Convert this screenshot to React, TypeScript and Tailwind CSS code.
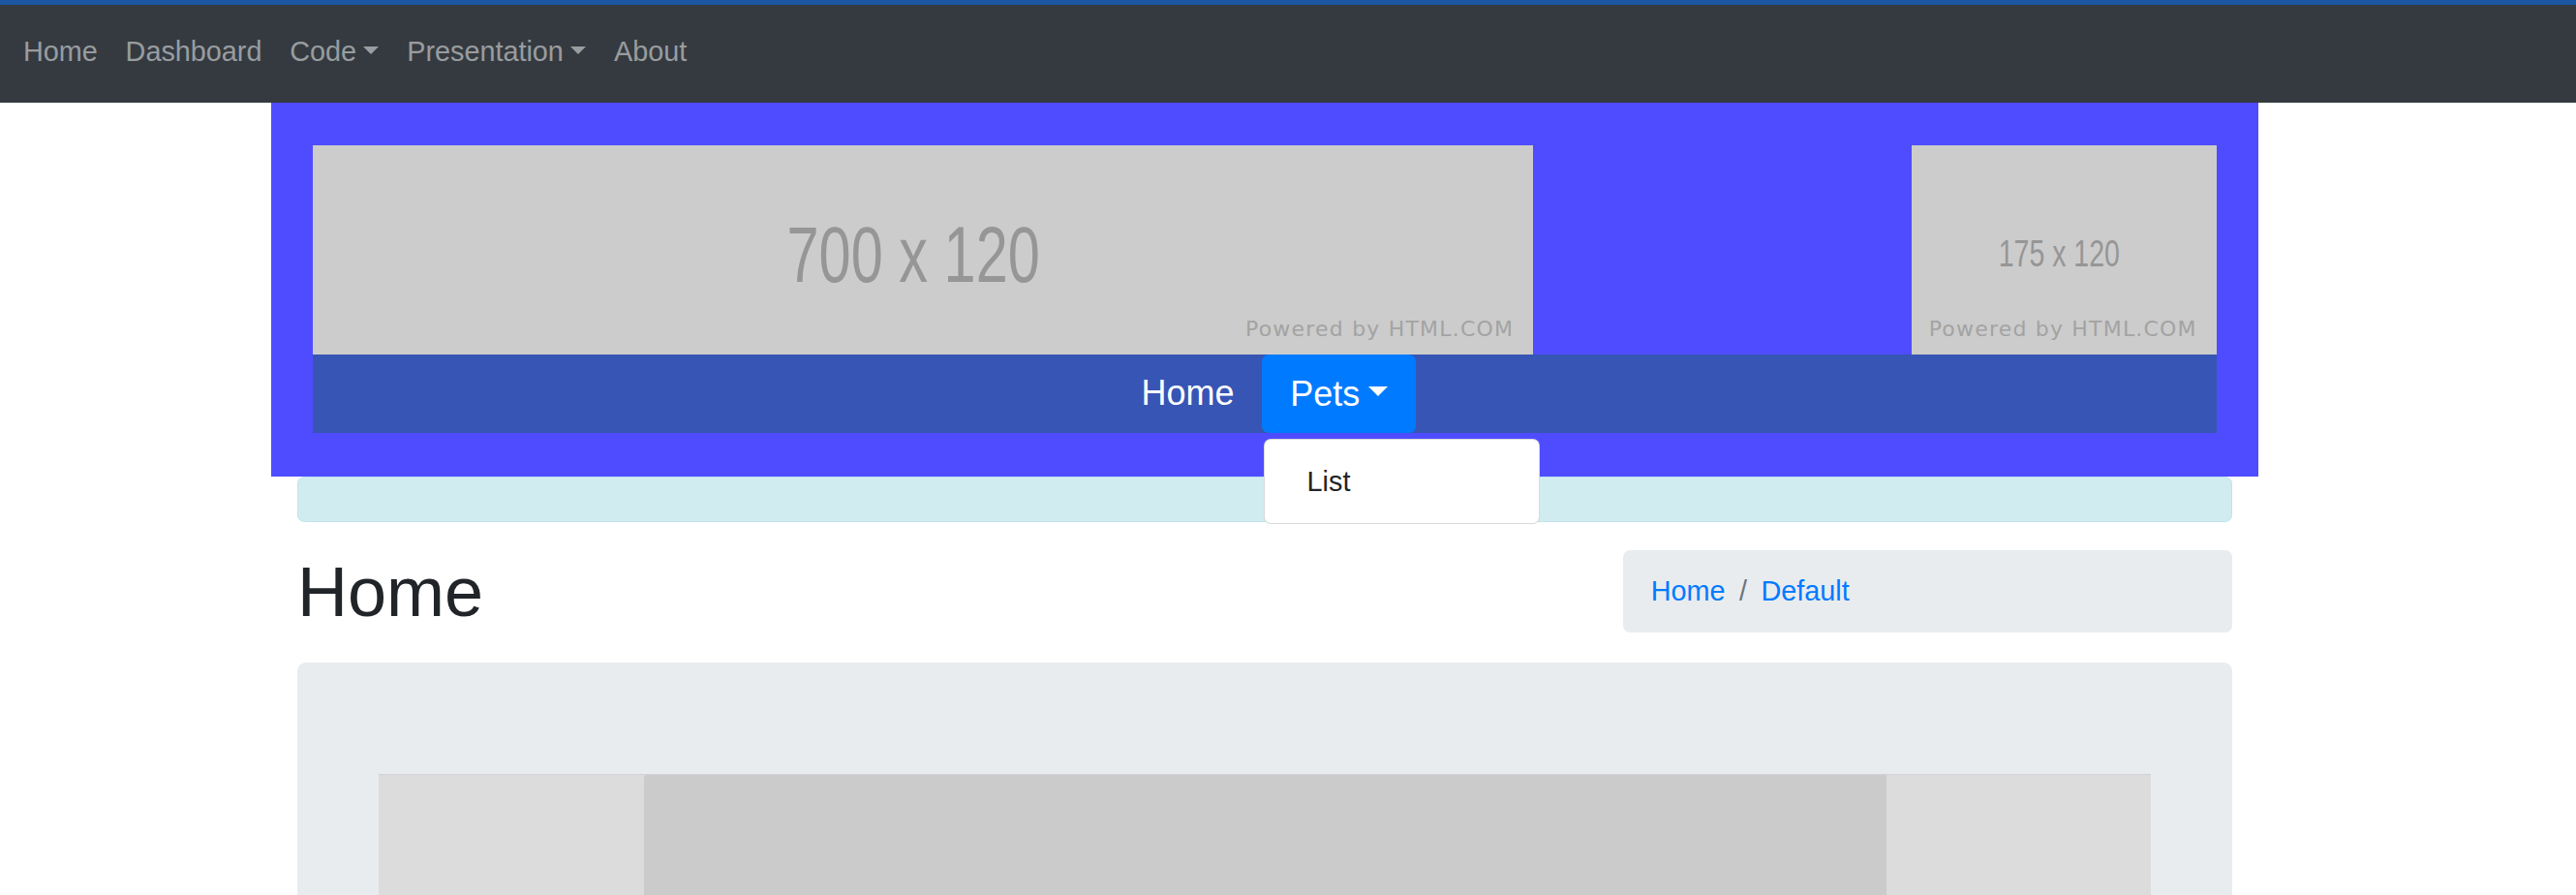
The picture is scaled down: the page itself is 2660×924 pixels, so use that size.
import { ReactNode } from "react";

const TOP_LINKS = [
  { label: "Home" },
  { label: "Dashboard" },
  { label: "Code", caret: true },
  { label: "Presentation", caret: true },
  { label: "About" },
];

function Caret({ size, color }: { size: "sm" | "lg"; color: string }) {
  const cls =
    size === "lg"
      ? "ml-[9.2px] border-t-[10.8px] border-x-[10.8px]"
      : "ml-[7.3px] border-t-[8.6px] border-x-[8.6px]";
  return (
    <span
      className={`inline-block align-[0.255em] border-x-transparent ${cls} ${color}`}
    />
  );
}

function Placeholder({
  width,
  label,
  labelClass,
}: {
  width: string;
  label: string;
  labelClass: string;
}) {
  return (
    <div
      className={`relative flex h-[216px] items-center justify-center bg-[#cccccc] ${width}`}
    >
      <span className={`text-[#969696] ${labelClass}`}>{label}</span>
      <span className="absolute right-[20px] bottom-[15px] font-['DejaVu_Sans',sans-serif] text-[22px] leading-[22px] tracking-[1.2px] text-[#a3a3a3]">
        Powered by HTML.COM
      </span>
    </div>
  );
}

function Crumb({ children }: { children: ReactNode }) {
  return <span className="text-[#007bff]">{children}</span>;
}

export default function App() {
  return (
    <div className="h-[924px] overflow-hidden bg-white font-['Liberation_Sans',Arial,sans-serif] text-[28.8px] leading-[1.5] text-[#212529]">
      <div className="h-[5px] bg-[#1c56a2]" />
      <nav className="flex h-[101px] items-center bg-[#343a40] pb-[4px] pl-[9.6px]">
        {TOP_LINKS.map((l) => (
          <a key={l.label} className="px-[14.4px] text-white/50">
            {l.label}
            {l.caret && <Caret size="sm" color="border-t-white/50" />}
          </a>
        ))}
      </nav>

      <div className="w-[2612px]">
        <div className="mx-auto w-[2052px]">
          <header className="bg-[#4f4cff] px-[43.2px] pt-[44px] pb-[45px]">
            <div className="flex justify-between">
              <Placeholder
                width="w-[1260px]"
                label="700 x 120"
                labelClass="-translate-x-[10px] translate-y-[5px] scale-y-[1.38] text-[59.5px] leading-none"
              />
              <Placeholder
                width="w-[315px]"
                label="175 x 120"
                labelClass="-translate-x-[5px] translate-y-[3px] scale-y-[1.38] text-[28.5px] leading-none"
              />
            </div>
            <div className="flex h-[81px] justify-center bg-[#3755b4] text-[36px] leading-[54px] text-white">
              <a className="px-[28.8px] py-[13px]">Home</a>
              <div className="relative">
                <button className="h-[81px] rounded-[7.2px] bg-[#007bff] px-[28.8px] leading-[54px] text-white">
                  Pets
                  <Caret size="lg" color="border-t-white" />
                </button>
                <div className="absolute top-[calc(100%+6px)] left-[2px] z-10 w-[285px] rounded-[7.2px] border border-black/15 bg-white py-[14.4px] text-[28.8px] leading-[43.2px] text-[#212529]">
                  <div className="px-[43.2px] py-[7.2px]">List</div>
                </div>
              </div>
            </div>
          </header>

          <div className="px-[27px]">
            <div className="mb-[29px] h-[47px] rounded-[7.2px] border border-[#bee5eb] bg-[#d1ecf1]" />
            <div className="flex items-start justify-between">
              <h1 className="text-[72px] leading-[1.2] font-normal">Home</h1>
              <div className="flex h-[85px] w-[629px] items-center rounded-[7.2px] bg-[#e9ecef] px-[28.8px]">
                <Crumb>Home</Crumb>
                <span className="px-[14.4px] text-[#6c757d]">/</span>
                <Crumb>Default</Crumb>
              </div>
            </div>
            <div className="mt-[30px] rounded-[8.6px] bg-[#e9ecef] px-[57.6px] pt-[115px] pb-[115px]">
              <div className="px-[26px]">
                <div className="flex justify-center border-t border-[#d2d3d6] bg-[#dcdcdc]">
                  <div className="h-[420px] w-[1283px] rounded-tl-[3px] bg-[#cbcbcb]" />
                </div>
              </div>
            </div>
          </div>
        </div>
      </div>
    </div>
  );
}
